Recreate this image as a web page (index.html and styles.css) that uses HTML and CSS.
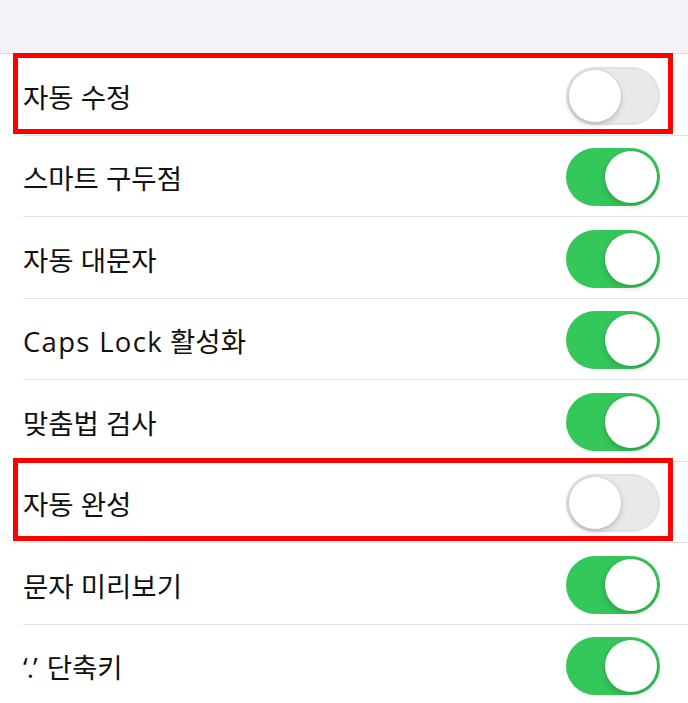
FILE: index.html
```html
<!DOCTYPE html>
<html>
<head>
    <meta charset="UTF-8">
    <title>키보드</title>
    <link rel="stylesheet" href="styles.css">
</head>
<body>
    <div class="top"></div>
    <ul class="list">
        <li class="row marked">
            <span class="label">자동 수정</span>
            <span class="switch"></span>
        </li>
        <li class="row">
            <span class="label">스마트 구두점</span>
            <span class="switch on"></span>
        </li>
        <li class="row">
            <span class="label">자동 대문자</span>
            <span class="switch on"></span>
        </li>
        <li class="row">
            <span class="label"><span class="latin">Caps Lock</span> 활성화</span>
            <span class="switch on"></span>
        </li>
        <li class="row">
            <span class="label">맞춤법 검사</span>
            <span class="switch on"></span>
        </li>
        <li class="row marked marked2">
            <span class="label">자동 완성</span>
            <span class="switch"></span>
        </li>
        <li class="row">
            <span class="label">문자 미리보기</span>
            <span class="switch on"></span>
        </li>
        <li class="row">
            <span class="label"><span class="quote">‘.’</span> 단축키</span>
            <span class="switch on"></span>
        </li>
    </ul>
</body>
</html>
```

FILE: styles.css
```css
*{
    margin: 0;
    padding: 0;
    box-sizing: border-box;
}
ul,li{
    list-style: none;
}
html,body{
    width: 100%;
    height: 100%;
    overflow: hidden;
    background: #fff;
    font-family: "Open Sans", "Noto Sans CJK KR", sans-serif;
    color: #000;
}
.top{
    height: 54px;
    background: #f2f2f7;
    border-bottom: 1px solid #dedee2;
}
.row{
    position: relative;
    display: flex;
    align-items: center;
    justify-content: space-between;
    height: 81.5px;
    padding: 2px 28px 0 23px;
}
.row:after{
    content: "";
    position: absolute;
    left: 23px;
    right: 0;
    bottom: 0;
    height: 1px;
    background: #e2e2e4;
}
.label{
    font-size: 27.5px;
    color: #111;
}
.latin{
    letter-spacing: 1.3px;
}
.quote{
    letter-spacing: -1px;
    margin-right: 3px;
}
/* red annotation boxes over the rows */
.marked:before{
    content: "";
    position: absolute;
    top: -1px;
    left: 13px;
    right: 15px;
    bottom: 2px;
    border: 5px solid #ff0000;
    z-index: 2;
}
.marked2:before{
    top: -4px;
}
.switch{
    position: relative;
    width: 94px;
    height: 58px;
    border-radius: 29px;
    background: #e9e9ea;
    box-shadow: inset 0 0 0 2px #e2e2e2;
}
.switch:after{
    content: "";
    position: absolute;
    top: 3px;
    left: 3px;
    width: 52px;
    height: 52px;
    border-radius: 50%;
    background: #fff;
    box-shadow: 0 3px 6px rgba(0,0,0,.18), 0 0 0 1px rgba(0,0,0,.05);
}
.switch.on{
    background: #34c759;
    box-shadow: none;
}
.switch.on:after{
    left: auto;
    right: 3px;
}
```
